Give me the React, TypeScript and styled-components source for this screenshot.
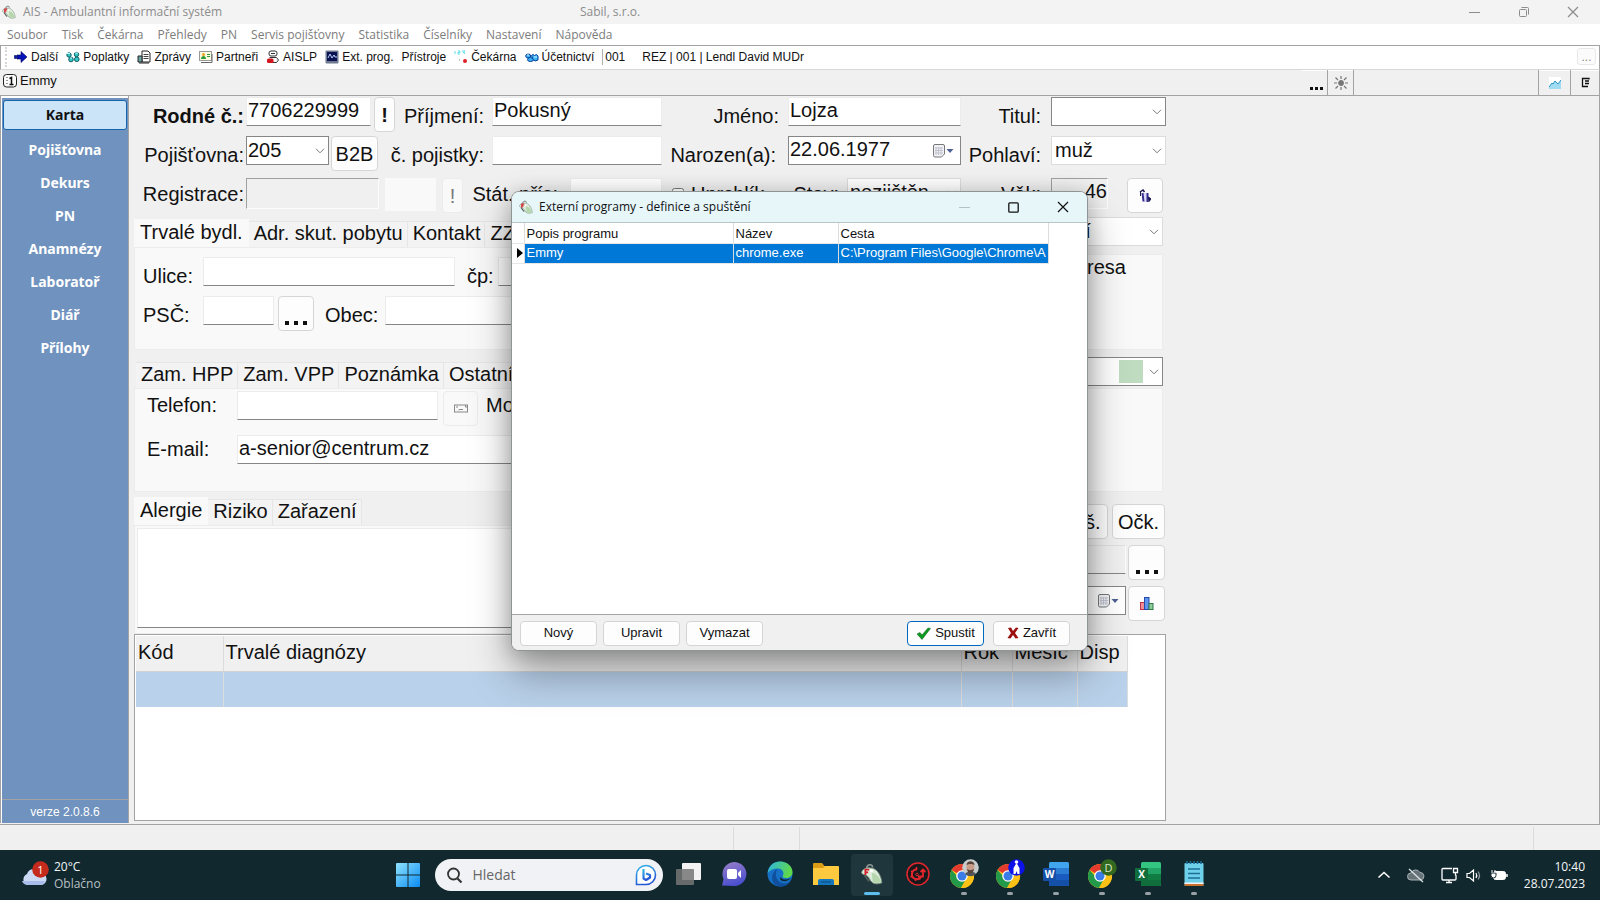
import React from 'react';
import styled, { createGlobalStyle, css } from 'styled-components';

const ARIAL = '"Liberation Sans", Arial, sans-serif';
const UI = '"Open Sans", "Noto Sans", sans-serif';

const GlobalStyle = createGlobalStyle`
  *, *::before, *::after { box-sizing: border-box; }
  body { margin: 0; background: #f0f0f0; color: #111; font: 12px/16px ${ARIAL}; }
  button, input, select, textarea { font: inherit; color: inherit; margin: 0; border-radius: 0; }
  button { padding: 0; border: 0; background: none; white-space: nowrap; }
  svg { display: block; flex: none; }
`;

const Desktop = styled.div`
  position: relative;
  display: flex;
  flex-direction: column;
  min-height: 100vh;
  overflow: hidden;
`;

/* ---------- window chrome ---------- */
const TitleBar = styled.header`
  display: flex;
  align-items: center;
  height: 24px;
  padding: 0 3px 0 2px;
  gap: 7px;
  background: #f3f3f3;
  color: #8c8c8c;
  font-family: ${UI};
`;
const AppTitle = styled.span`flex: 0 1 550px;`;
const WindowButtons = styled.div`
  display: flex;
  margin-left: auto;
`;
const WindowButton = styled.button`
  display: grid;
  place-items: center;
  width: 49px;
  height: 24px;
`;
const MenuBar = styled.nav`
  display: flex;
  align-items: center;
  gap: 14px;
  height: 21px;
  padding: 0 7px;
  background: #fff;
  font-family: ${UI};
`;
const MenuItem = styled.button`color: #7c7c7c;`;
const Toolbar = styled.div`
  display: flex;
  align-items: center;
  gap: 8px;
  height: 25px;
  padding: 0 3px 2px 4px;
  background: #fff;
  border: 1px solid #a3a3a3;
  border-bottom-color: #d8d8d8;
`;
const Grip = styled.span`
  height: 20px;
  border-left: 2px dotted #d6d6d6;
  margin-right: -1px;
`;
const ToolButton = styled.button`
  display: flex;
  align-items: center;
  gap: 3px;
`;
const ToolText = styled.span<{ $rule?: boolean }>`
  margin-right: 9px;
  ${p => p.$rule && css`border-left: 1px solid #b0b0b0; padding-left: 2px;`}
`;
const MoreButton = styled.button`
  width: 19px;
  height: 17px;
  margin-left: auto;
  border: 1px solid #e8e8e8;
  border-radius: 3px;
  background: #fbfbfb;
  color: #8a8a8a;
  line-height: 12px;
`;
const ContextBar = styled.div`
  display: flex;
  height: 26px;
  border-bottom: 1px solid #a3a3a3;
  border-right: 1px solid #a3a3a3;
`;
const ContextTitle = styled.div`
  display: flex;
  align-items: center;
  gap: 3px;
  flex: 1;
  padding: 0 3px 4px;
  font-size: 13px;
`;
const ContextCell = styled.button<{ $w: number }>`
  display: grid;
  place-items: center;
  width: ${p => p.$w}px;
  border-right: 1px solid #a3a3a3;
  box-shadow: inset 0 1px #fff;
  &:last-child { border-right: 0; }
`;
const ContextSpace = styled.div`
  width: 185px;
  border-right: 1px solid #a3a3a3;
`;

/* ---------- work area ---------- */
const WorkArea = styled.main`
  display: flex;
  flex: 1;
  gap: 5px;
  border-right: 1px solid #a3a3a3;
`;
const Sidebar = styled.aside`
  display: flex;
  flex-direction: column;
  width: 129px;
  margin-bottom: 1px;
  border-left: 1px solid #a3a3a3;
  box-shadow: inset 2px 2px #fff;
  border-right: 1px solid #a3a3a3;
`;
const SideNav = styled.nav`
  display: flex;
  flex: 1;
  flex-direction: column;
  margin: 2px 0 0 1px;
  padding: 2px 1px 0;
  background: #7092be;
`;
const SideItem = styled.button<{ $active?: boolean }>`
  height: 33px;
  color: #fff;
  font: bold 14px/20px "Noto Sans", "Open Sans", sans-serif;
  ${p => p.$active && css`
    height: 30px;
    margin-bottom: 3px;
    border: 1px solid #1464ac;
    border-radius: 3px;
    background: #cce4f7;
    color: #111;
  `}
`;
const Version = styled.div`
  height: 24px;
  margin-left: 1px;
  border-top: 1px solid #a3a3a3;
  background: #7092be;
  color: #fff;
  line-height: 25px;
  text-align: center;
`;
const Card = styled.section`
  display: flex;
  flex: 0 1 1032px;
  flex-direction: column;
  padding: 1px 0 3px;
  font-size: 20px;
  line-height: 24px;
`;

const field = css`
  display: block;
  min-width: 0;
  height: 29px;
  padding: 0 1px 2px;
  border: 1px solid #ececec;
  border-bottom-color: #868686;
  background: #fff;
  outline: 0;
`;
const Input = styled.input<{ $w?: number; $flat?: boolean; $muted?: boolean }>`
  ${field}
  width: ${p => (p.$w ? `${p.$w}px` : '100%')};
  ${p => p.$flat && css`
    height: 31px;
    padding-bottom: 4px;
    background: #f0f0f0;
    border-color: #a0a0a0 #fcfcfc #fcfcfc #a0a0a0;
  `}
  ${p => p.$muted && css`background: #f0f0f0; border-color: #e0e0e0 #fcfcfc #868686;`}
  &[data-align='end'] { text-align: right; padding-right: 0; }
`;
const Pale = styled.div`
  width: 51px;
  height: 33px;
  background: #f9f9f9;
`;
const Label = styled.label<{ $bold?: boolean; $gap?: number }>`
  padding-right: ${p => p.$gap ?? 8}px;
  line-height: 38px;
  text-align: right;
  white-space: nowrap;
  font-weight: ${p => (p.$bold ? 'bold' : 'normal')};
`;
const FormRow = styled.div<{ $h: number; $lead?: string }>`
  display: grid;
  grid-template-columns: 112px ${p => p.$lead ?? '136px 110px'} 170px 126px 173px 90px 115px;
  height: ${p => p.$h}px;
`;
const StateRow = styled(FormRow)`
  grid-template-columns: 112px 218px 106px 92px 123px 62px 114px 90px 115px;
  & > :not(label) { margin-top: 2px; }
  & > label { line-height: 36px; }
`;
const Group = styled.div<{ $gap?: number }>`
  display: flex;
  align-items: flex-start;
  gap: ${p => p.$gap ?? 3}px;
  & > * { flex: none; }
`;
const Check = styled.div`
  display: flex;
  align-items: center;
  gap: 7px;
  padding-left: 10px;
  height: 32px;
`;
const CheckBox = styled.input`
  width: 12px;
  height: 12px;
  margin: 0;
`;
const Button = styled.button<{ $w: number; $faint?: boolean; $bold?: boolean }>`
  display: grid;
  flex: none;
  place-items: center;
  width: ${p => p.$w}px;
  height: 35px;
  border: 1px solid ${p => (p.$faint ? '#ececec' : '#d6d6d6')};
  border-radius: 4px;
  background: ${p => (p.$faint ? '#f9f9f9' : '#fdfdfd')};
  color: ${p => (p.$faint ? '#777' : '#111')};
  font-weight: ${p => (p.$bold ? 'bold' : 'normal')};
`;
const SelectBox = styled.div<{ $w?: number; $dark?: boolean }>`
  display: grid;
  align-items: center;
  width: ${p => (p.$w ? `${p.$w}px` : '100%')};
  height: 29px;
  border: 1px solid ${p => (p.$dark ? '#868686' : '#dcdcdc')};
  background: #fff;
  & > * { grid-area: 1 / 1; }
  & > svg { justify-self: end; margin-right: 3px; pointer-events: none; }
`;
const NativeSelect = styled.select<{ $pad?: number }>`
  appearance: none;
  width: 100%;
  height: 27px;
  padding: 0 0 2px ${p => p.$pad ?? 1}px;
  border: 0;
  background: transparent;
  outline: 0;
`;
const DateBox = styled.div`
  display: flex;
  align-items: center;
  height: 29px;
  padding-right: 6px;
  border: 1px solid #868686;
  background: #fff;
`;
const DateInput = styled.input`
  flex: 1;
  min-width: 0;
  height: 27px;
  padding: 0 0 2px 1px;
  border: 0;
  background: transparent;
  outline: 0;
`;

const Split = styled.div<{ $h: number }>`
  display: flex;
  gap: 6px;
  height: ${p => p.$h}px;
  padding-right: 3px;
`;
const TabArea = styled.div<{ $top: number }>`
  display: flex;
  flex: 1;
  flex-direction: column;
  padding-top: ${p => p.$top}px;
`;
const TabStrip = styled.div<{ $inset?: boolean }>`
  display: flex;
  align-items: flex-end;
  padding-left: ${p => (p.$inset ? 2 : 0)}px;
`;
const Tab = styled.button<{ $active?: boolean }>`
  height: 26px;
  padding: 0 5px 2px;
  background: #f3f3f3;
  box-shadow: inset -1px 1px #e6e6e6;
  ${p => p.$active && css`
    height: 28px;
    padding: 0 6px 3px;
    background: #f9f9f9;
    box-shadow: none;
  `}
`;
const TabPanel = styled.div`
  flex: 1;
  border: 1px solid #ececec;
  background: #f9f9f9;
`;
const AddressPanel = styled(TabPanel)`
  display: flex;
  flex-direction: column;
  gap: 3px;
  padding: 9px 0 0 8px;
`;
const AddressRow = styled.div`
  display: flex;
  align-items: flex-start;
  height: 36px;
  overflow: hidden;
  & > label { line-height: 38px; }
`;
const FixedLabel = styled.label<{ $w: number; $lead?: number }>`
  flex: none;
  width: ${p => p.$w}px;
  padding-left: ${p => p.$lead ?? 0}px;
`;
const ContactHead = styled.div`
  display: flex;
  align-items: flex-end;
  justify-content: space-between;
  height: 38px;
  padding-right: 3px;
`;
const ContactSelect = styled.div`padding-bottom: 2px;`;
const Swatch = styled.span`
  justify-self: end;
  width: 24px;
  height: 23px;
  margin-right: 19px;
  background: #bfdcc1;
`;
const ContactPanel = styled.div`
  height: 104px;
  margin-right: 3px;
  padding: 2px 0 0 12px;
  border: 1px solid #ececec;
  background: #f9f9f9;
`;
const ContactRow = styled.div`
  display: flex;
  align-items: flex-start;
  height: 44px;
  & > label { line-height: 28px; }
`;
const Mobile = styled.label`padding: 0 8px;`;
const RightColumn = styled.div`
  display: flex;
  flex-direction: column;
  gap: 8px;
  width: 200px;
`;
const SideCaption = styled(TabPanel)`
  padding: 0 36px 0 0;
  text-align: right;
`;
const Notes = styled.textarea`
  display: block;
  width: 100%;
  height: 100px;
  border: 1px solid #ececec;
  border-bottom-color: #868686;
  background: #fff;
  resize: none;
  outline: 0;
`;
const NotesPanel = styled(TabPanel)`padding: 2px;`;
const Actions = styled.div`
  display: flex;
  flex-direction: column;
  gap: 6px;
  width: 250px;
  margin-right: -2px;
  padding-top: 12px;
`;
const ActionRow = styled.div`
  display: flex;
  justify-content: flex-end;
  align-items: flex-start;
  gap: 2px;
  height: 35px;
  & > button + button { margin-left: 2px; }
  & > div, & > input { flex: 1; }
`;

const DiagnosisFrame = styled.div`
  flex: 1;
  border: 1px solid #a3a3a3;
  padding: 1px;
  background: #fff;
`;
const DiagnosisTable = styled.table`
  width: 991px;
  table-layout: fixed;
  border-collapse: collapse;
  th, td { height: 36px; padding: 0 2px 4px; text-align: left; font-weight: normal; border-right: 1px solid #dcdcdc; }
  th { height: 35px; padding-bottom: 3px; background: #f0f0f0; border-bottom: 1px solid #d2d2d2; }
  td { background: #b9d1ea; }
`;
const StatusBar = styled.footer`
  display: flex;
  height: 26px;
  border-top: 1px solid #a3a3a3;
`;
const StatusCell = styled.div<{ $w?: number }>`
  flex: ${p => (p.$w ? `0 0 ${p.$w}px` : 1)};
  margin-top: 2px;
  border-right: 1px solid #dcdcdc;
  &:last-child { border-right: 0; }
`;

/* ---------- dialog ---------- */
const Dialog = styled.div`
  position: absolute;
  left: 511px;
  top: 191px;
  display: flex;
  flex-direction: column;
  width: 577px;
  height: 460px;
  overflow: hidden;
  border: 1px solid #8f9496;
  border-radius: 8px;
  background: #fff;
  font-size: 13px;
  box-shadow: 0 22px 40px rgba(0, 0, 0, 0.34), 0 2px 20px rgba(0, 0, 0, 0.2);
`;
const DialogTitle = styled.div`
  display: flex;
  align-items: center;
  gap: 6px;
  height: 31px;
  padding-left: 7px;
  border-bottom: 1px solid #b9c4c6;
  background: #e6f6f9;
  font: 12px/16px ${UI};
`;
const DialogBody = styled.div`flex: 1;`;
const ProgramTable = styled.table`
  width: 536px;
  table-layout: fixed;
  border-collapse: collapse;
  th, td {
    height: 20px;
    padding: 0 2px;
    overflow: hidden;
    border-right: 1px solid #dcdcdc;
    border-bottom: 1px solid #e6e6e6;
    text-align: left;
    font-weight: normal;
    white-space: nowrap;
  }
  th { padding-top: 2px; }
  td { background: #0078d7; color: #fff; }
  td:first-child { background: #fff; padding: 0 0 0 5px; }
`;
const DialogFooter = styled.div`
  display: flex;
  align-items: center;
  gap: 6px;
  height: 36px;
  padding: 1px 17px 0 8px;
  border-top: 1px solid #a3a3a3;
  background: #f0f0f0;
`;
const DialogButton = styled.button<{ $primary?: boolean }>`
  display: flex;
  align-items: center;
  justify-content: center;
  gap: 4px;
  width: 77px;
  height: 25px;
  border: 1px solid ${p => (p.$primary ? '#0067c0' : '#d4d4d4')};
  border-radius: 4px;
  background: #fdfdfd;
`;
const FooterEnd = styled.div`
  display: flex;
  gap: 9px;
  margin-left: auto;
`;

/* ---------- taskbar ---------- */
const Taskbar = styled.footer`
  display: grid;
  grid-template-columns: 1fr auto 1fr;
  align-items: center;
  height: 50px;
  background: #11282f;
  color: #f4f6f7;
  font-family: ${UI};
`;
const Weather = styled.button`
  display: flex;
  align-items: center;
  gap: 5px;
  padding-left: 20px;
  text-align: left;
  line-height: 17px;
`;
const Muted = styled.div`color: #b9c0c3;`;
const TaskIcons = styled.div`
  display: flex;
  align-items: center;
`;
const StartButton = styled.button`
  padding: 0 15px 0 12px;
`;
const SearchBox = styled.label`
  display: flex;
  align-items: center;
  gap: 10px;
  width: 228px;
  height: 32px;
  padding: 0 6px 0 11px;
  border-radius: 16px;
  background: #f1f2f5;
  margin-right: 2px;
`;
const SearchInput = styled.input`
  flex: 1;
  min-width: 0;
  padding: 0;
  border: 0;
  background: transparent;
  outline: 0;
  color: #555;
  font-size: 14px;
  &::placeholder { color: #666; opacity: 1; }
`;
const TaskButton = styled.button<{ $state?: 'active' | 'open' }>`
  display: grid;
  grid-template-rows: 1fr 3px;
  justify-items: center;
  align-items: center;
  width: 42px;
  height: 42px;
  margin: 0 2px;
  padding: 2px 0 1px;
  border-radius: 4px;
  background: ${p => (p.$state === 'active' ? '#20363d' : 'transparent')};
  &::after {
    content: '';
    width: ${p => (p.$state === 'active' ? 16 : 6)}px;
    height: 3px;
    border-radius: 2px;
    background: ${p => (p.$state === 'active' ? '#5cbdf0' : p.$state ? '#98a1a5' : 'transparent')};
  }
`;
const Tray = styled.div`
  display: flex;
  align-items: center;
  justify-content: flex-end;
  gap: 7px;
  padding-right: 15px;
`;
const TrayButton = styled.button<{ $wide?: boolean }>`padding-right: ${p => (p.$wide ? 9 : 0)}px;`;
const Clock = styled.button`
  text-align: right;
  line-height: 17px;
`;

/* ---------- icons ---------- */
const Chevron = () => (
  <svg width="10" height="6" viewBox="0 0 10 6" fill="none" stroke="#777"><path d="M1 .8 5 4.8 9 .8" /></svg>
);
const Logo = ({ size = 14 }: { size?: number }) => (
  <svg width={size} height={size} viewBox="0 0 20 20">
    <path d="M5 5.500C5 1 10.500.2 10.500 4" fill="none" stroke="#8b9690" strokeWidth="1.500" />
    <path d="M.5 9C1 5.500 5 4 8.500 4.500c5 0 9.500 5 10.500 13.500-4 1.500-7 1.200-9-.5-2-1.800-2.500-4.500-4.500-6C4 10.500 2 11 .5 9z" fill="#dcecd9" stroke="#7b8f82" strokeWidth=".8" />
    <path d="M10 9c3 0 6.500 3 8.500 8.500-3.500 1.200-6.500.8-8-.5z" fill="#b5d6ad" />
    <path d="M3 11c1.500 1 2 4 4.500 5.500" fill="none" stroke="#526058" strokeWidth="1.600" />
    <path d="M4 11V6h3.500M4 8.500h2.500" fill="none" stroke="#d6202e" strokeWidth="1.700" />
    <circle cx="9.500" cy="7" r="1.400" fill="#fff" />
  </svg>
);
const MinimizeIcon = ({ c }: { c: string }) => <svg width="11" height="11" stroke={c}><path d="M0 5.500h11" /></svg>;
const RestoreIcon = () => (
  <svg width="12" height="12" fill="none" stroke="#8c8c8c"><rect x="1.500" y="3.500" width="7" height="7" rx="1" /><path d="M3.500 1.500h6a1 1 0 0 1 1 1v6" /></svg>
);
const MaximizeIcon = () => <svg width="11" height="11" fill="none" stroke="#111" strokeWidth="1.300"><rect x=".8" y=".8" width="9.400" height="9.400" rx="1" /></svg>;
const CloseIcon = ({ c }: { c: string }) => <svg width="12" height="12" stroke={c} strokeWidth="1.200"><path d="m1 1 10 10M11 1 1 11" /></svg>;
const NextIcon = () => <svg width="14" height="14" viewBox="0 0 14 14"><path d="M.5 5.500h2v3h-2zM3 5h4V1.500L13 7l-6 5.500V9H3z" fill="#0512b8" stroke="#000a50" strokeWidth=".6" /></svg>;
const FeesIcon = () => (
  <svg width="14" height="14" viewBox="0 0 14 14"><g fill="#35c6c6" stroke="#0c5e62"><circle cx="3" cy="5" r="2.200" /><circle cx="5" cy="9.500" r="2.300" /><circle cx="10.500" cy="4.500" r="2.200" /><circle cx="10.800" cy="9.300" r="2.300" /></g><path d="M1 3.500h3M9 3h3M4 8h2" stroke="#c6ffff" /></svg>
);
const ReportsIcon = () => (
  <svg width="14" height="14" viewBox="0 0 14 14"><path d="M5 1h6l2 2v9H5z" fill="#fff" stroke="#222" /><path d="M6.500 4.500h5M6.500 6.500h5M6.500 8.500h5" stroke="#444" /><path d="M1 6h4v6H1z" fill="#6aa5a6" stroke="#222" /><path d="M2 13h10" stroke="#222" /></svg>
);
const PartnersIcon = () => (
  <svg width="14" height="14" viewBox="0 0 14 14"><rect x=".5" y="1.500" width="12" height="9" fill="#fffce0" stroke="#999" /><path d="M2 12.500h11V4" fill="none" stroke="#666" /><path d="M2 9c0-4 5-4 5 0z" fill="#2f9c35" /><circle cx="4.500" cy="4.500" r="1.500" fill="#f0a020" /><path d="M8 4.500h3M8 6.500h3" stroke="#2f9c35" /></svg>
);
const AislpIcon = () => (
  <svg width="14" height="14" viewBox="0 0 14 14"><rect x="3" y="1" width="8" height="5" rx="2" fill="#fff" stroke="#333" /><path d="M5 3.500h4" stroke="#333" /><path d="M3.500 7.500h7l2 2.500-2 2.500H6" fill="#f6f6f6" stroke="#333" /><rect x="1" y="8.500" width="6.500" height="4.500" rx="1.500" fill="#d1161c" /></svg>
);
const ExtIcon = () => (
  <svg width="14" height="14" viewBox="0 0 14 14"><rect x=".5" y=".5" width="13" height="13" rx="1" fill="#6f7a90" /><rect x="2" y="2" width="10" height="9" fill="#0a1250" /><path d="M3 8 5 4l2 4 2-3 1 2h2" fill="none" stroke="#b7d2ff" /></svg>
);
const WaitingIcon = () => (
  <svg width="14" height="14" viewBox="0 0 14 14"><path d="M1 1v3M4 1h2v1.500H4V4h2M8 1h3l-2 1.500 2 .5-1 1" fill="none" stroke="#54dbe4" strokeWidth=".9" /><circle cx="11" cy="11" r="2" fill="#dd1f26" /><path d="M5 10h1" stroke="#888" /></svg>
);
const AccountIcon = () => (
  <svg width="14" height="14" viewBox="0 0 14 14"><g fill="#37b4f4" stroke="#0b3c9c"><ellipse cx="3.200" cy="6" rx="2.500" ry="2" /><ellipse cx="5.500" cy="9.500" rx="3" ry="2" /><path d="M6.500 5.500 8 4.500l1.500 1 2-1 1.500 1.500v4l-3 1-2-1.500z" /></g><path d="M2 5h2M9 7h3" stroke="#d9f6ff" /></svg>
);
const PageIcon = () => (
  <svg width="14" height="14" viewBox="0 0 14 14"><rect x=".5" y=".5" width="13" height="12.500" rx="3" fill="#fafafa" stroke="#222" /><path d="M3 3.500h2M3 6.500h2M3 9.500h2" stroke="#999" /><path d="m6.500 4.500 2-1v7M6.500 10.500h4" fill="none" stroke="#111" strokeWidth="1.500" /></svg>
);
const SunIcon = () => (
  <svg width="14" height="14" viewBox="0 0 14 14" stroke="#777" strokeWidth="1.200"><circle cx="7" cy="7" r="2.300" fill="#777" /><path d="M7 0v3M7 11v3M0 7h3M11 7h3M1.500 1.500l2.500 2.500M10 10l2.500 2.500M12.500 1.500 10 4M4 10l-2.500 2.500" /></svg>
);
const TrendIcon = () => (
  <svg width="12" height="12" viewBox="0 0 12 12"><rect width="12" height="12" fill="#fff" /><path d="m0 10 3-4 1 1 2-3 3 3 3-4v9H0z" fill="#9fdcf2" /><path d="m0 10 3-4 1 1 2-3 3 3 3-4" fill="none" stroke="#2a94c9" /></svg>
);
const ServerIcon = () => <svg width="9" height="12" viewBox="0 0 9 12"><path d="M7 1.500H1.500v8H7M4 4h4M4 6.500h4M4 1.500h4v1" fill="none" stroke="#111" strokeWidth="1.300" /></svg>;
const DotsIcon = () => (
  <svg width="24" height="18" viewBox="0 0 24 18" fill="#111"><path d="M7 13h3v3H7zM12 13h3v3h-3zM17 13h3v3h-3z" /></svg>
);
const WideDotsIcon = () => <svg width="24" height="28" fill="#111"><path d="M1 21h4v4H1zM10 21h4v4h-4zM19 21h4v4h-4z" /></svg>;
const CalendarIcon = () => (
  <svg width="21" height="14" viewBox="0 0 21 14"><path d="M.5 2a1.500 1.500 0 0 1 1.500-1.500h8A1.500 1.500 0 0 1 11.500 2v8l-3 3H2A1.500 1.500 0 0 1 .5 11.500z" fill="#f2f3f7" stroke="#777" /><path d="M3 3v8M5.500 3v8M8 3v8M2 4h8M2 6.500h8M2 9h8" stroke="#c0c2ce" /><path d="M13.500 5h7l-3.500 4z" fill="#4c5f92" /></svg>
);
const TrashIcon = () => (
  <svg width="12" height="14" viewBox="0 0 12 14"><path d="M1 3 4 1l1.500 2" fill="none" stroke="#191650" strokeWidth="1.500" /><path d="M3.500 4h6v9h-5z" fill="#dcdaf8" /><path d="M3.500 4 4.500 12.500M8.500 4v9" stroke="#37308f" strokeWidth="2" /><path d="M1.500 3v4M9.500 8l2.500 2-2 2.500z" stroke="#191650" fill="#191650" /></svg>
);
const EnvelopeIcon = () => <svg width="14" height="9" viewBox="0 0 14 9" fill="none" stroke="#888"><rect x=".5" y="1" width="13" height="7" /><path d="M2 3h2M4.500 6l1.500-.5h3M11.500 1v2h2" /></svg>;
const ChartIcon = () => (
  <svg width="14" height="13" viewBox="0 0 14 13"><rect x=".5" y="5.500" width="4" height="7" fill="#ef8e96" stroke="#bf3644" /><rect x="4.500" y=".5" width="4.500" height="12" fill="#5d95ee" stroke="#264aa8" /><rect x="9" y="6.500" width="4" height="6" fill="#8fcd9b" stroke="#31794b" /></svg>
);
const TickIcon = () => <svg width="15" height="13" viewBox="0 0 15 13"><path d="m1 7 3-1.500L6 8l6-7 2.500.5L6 12.500z" fill="#0c9a20" stroke="#045a10" strokeWidth=".5" /></svg>;
const CrossIcon = () => <svg width="12" height="12" viewBox="0 0 12 12"><path d="m1 1 3-.5 2 3.500 3-3.500L11.500 1 8 6l3.500 5-3 .5L6 8l-2.500 3.500L.5 11 4 6z" fill="#9c1010" /></svg>;
const MarkerIcon = () => <svg width="6" height="10"><path d="M0 0 6 5 0 10z" fill="#000" /></svg>;

const WeatherIcon = () => (
  <svg width="29" height="28" viewBox="0 0 29 28">
    <path d="M7 24a6 6 0 0 1 0-11 7 7 0 0 1 13-1 6 6 0 0 1 1 12z" fill="#ccdaf6" /><path d="M2 20h23a5 5 0 0 1-4 4H7a6 6 0 0 1-5-4z" fill="#a9bdea" />
    <circle cx="20.500" cy="8.500" r="8.300" fill="#c42b1c" /><text x="20.500" y="12.500" fontSize="11" textAnchor="middle" fill="#fff">1</text>
  </svg>
);
const StartIcon = () => (
  <svg width="24" height="24" viewBox="0 0 24 24"><defs><linearGradient id="st" x2="1" y2="1"><stop stopColor="#8fe3ff" /><stop offset="1" stopColor="#0a8bf2" /></linearGradient></defs><path d="M0 1a1 1 0 0 1 1-1h10.500v11.500H0zM12.500 0H23a1 1 0 0 1 1 1v10.500H12.500zM0 12.500h11.500V24H1a1 1 0 0 1-1-1zM12.500 12.500H24V23a1 1 0 0 1-1 1H12.500z" fill="url(#st)" /></svg>
);
const SearchIcon = () => <svg width="17" height="17" fill="none" stroke="#333" strokeWidth="1.800"><circle cx="7.500" cy="7" r="5.500" /><path d="m11.500 11.500 4 4" strokeWidth="2.200" /></svg>;
const BingIcon = () => (
  <svg width="22" height="22" viewBox="0 0 22 22"><defs><linearGradient id="bg" x2=".4" y2="1"><stop stopColor="#35b8e8" /><stop offset="1" stopColor="#2455d4" /></linearGradient></defs><path d="M1.500 20.500V11a9.500 9.500 0 1 1 9.500 9.500z" fill="#fff" stroke="url(#bg)" strokeWidth="1.600" /><path d="M8.500 5v9.500l2.500 1.500 4-2.500v-2.500l-4-1.500" fill="none" stroke="url(#bg)" strokeWidth="2.200" strokeLinejoin="round" /></svg>
);
const TaskViewIcon = () => <svg width="26" height="24"><rect x="7" y="1" width="19" height="17" rx="1" fill="#f2f2f2" /><rect x="1" y="7" width="18" height="16" rx="1" fill="#767676" opacity=".85" /></svg>;
const TeamsIcon = () => (
  <svg width="26" height="26" viewBox="0 0 26 26"><defs><linearGradient id="tm" x2=".3" y2="1"><stop stopColor="#9a7fc8" /><stop offset="1" stopColor="#4c50cf" /></linearGradient></defs><path d="M1 24.500 2.500 18A12 12 0 1 1 13 25z" fill="url(#tm)" /><rect x="6" y="8" width="10" height="10" rx="2" fill="#fff" /><path d="m17 12 3-3v8l-3-3z" fill="#fff" /></svg>
);
const EdgeIcon = () => (
  <svg width="26" height="26" viewBox="0 0 26 26"><defs><linearGradient id="eg" x2="1" y2=".3"><stop stopColor="#2bb5e8" /><stop offset="1" stopColor="#5fd84a" /></linearGradient></defs><circle cx="13" cy="13" r="12.500" fill="#1670c5" /><path d="M.6 12C2 4 7 .5 13 .5 21 .5 25.500 6 25.500 11c0 4-3 6-6.500 6-3 0-4-1-3-2.500 1.500-3-.5-7-5-7-5 0-8.500 2-10.400 4.500z" fill="url(#eg)" /><path d="M11 8c-4 3-3 13 6 14.500 2 .3 5-1 6-2-3 6-12 6.500-16 2S6 9 11 8z" fill="#0f4f9e" /><path d="M14 15c-1 3 4 5 10 2-2 3-9 5-11 1z" fill="#11282f" /></svg>
);
const FolderIcon = () => (
  <svg width="26" height="24" viewBox="0 0 26 24"><path d="M0 2a1 1 0 0 1 1-1h8l2.500 3H25v5H0z" fill="#dc9c15" /><path d="M0 6h10l2-2h13a1 1 0 0 1 1 1v18H0z" fill="#fdc93e" /><path d="M5 23v-4a2 2 0 0 1 2-2h12a2 2 0 0 1 2 2v4z" fill="#1477bd" /><path d="M8 20h10" stroke="#0c5791" strokeWidth="1.500" /></svg>
);
const GearIcon = () => (
  <svg width="24" height="24" viewBox="0 0 24 24" fill="none" stroke="#e2262c"><circle cx="12" cy="12" r="11" fill="#17191d" strokeWidth="1.500" /><path d="M11 7.500a4.800 4.800 0 1 0 4 7" strokeWidth="2" /><path d="M10.500 5v3M5 9l2 1.500M4.500 15l2.500-1M9.500 19v-3M14 17.500l-1-2" strokeWidth="1.600" /><circle cx="11" cy="12.500" r="1.300" /><path d="M12 14.500h5V8M14.500 10 17 7.500l2.500 2.500" strokeWidth="1.800" /></svg>
);
const ChromeIcon = ({ badge }: { badge: 'photo' | 'figure' | 'letter' }) => (
  <svg width="30" height="30" viewBox="0 0 30 30">
    <circle cx="13" cy="17" r="12" fill="#fbc116" />
    <path d="M13 17 2.600 11A12 12 0 0 1 23.400 11z" fill="#e33b2e" />
    <path d="M2.600 11A12 12 0 0 0 12 29l5-8.500L8 17z" fill="#229a49" />
    <path d="M23.400 11H13v3l4 6-5 9a12 12 0 0 0 11.400-18z" fill="#fbc116" />
    <circle cx="13" cy="17" r="5.800" fill="#fff" /><circle cx="13" cy="17" r="4.500" fill="#3b7de8" />
    {badge === 'photo' && <g><circle cx="21.500" cy="8.500" r="8.300" fill="#c9cccd" /><path d="M16 15c1-3 10-3 11 0a8 8 0 0 1-11 0z" fill="#50565b" /><ellipse cx="21.500" cy="8.500" rx="4" ry="5" fill="#c89d89" /><path d="M17.500 6c0-5 8-5 8 0-2-1.500-6-1.500-8 0M18 10c1 6 6 6 7 0-2 1.500-5 1.500-7 0" fill="#59443c" /></g>}
    {badge === 'figure' && <g><circle cx="21.500" cy="8.500" r="8.300" fill="#0d12e8" /><circle cx="21.500" cy="3" r="1.800" fill="#fff" /><path d="m21.500 4 3 5v6h-2l-1-3-1 3h-2V9z" fill="#fff" /></g>}
    {badge === 'letter' && <g><circle cx="21.500" cy="8.500" r="8.300" fill="#33691e" /><text x="21.500" y="12.500" fontSize="11" textAnchor="middle" fill="#d5e8cc">D</text></g>}
  </svg>
);
const OfficeIcon = ({ letter, tones }: { letter: string; tones: string[] }) => (
  <svg width="26" height="24" viewBox="0 0 26 24">
    <rect x="6" width="20" height="24" rx="1.500" fill={tones[0]} /><path d="M6 6h20v6H6z" fill={tones[1]} /><path d="M6 12h20v6H6z" fill={tones[2]} /><path d="M6 18h20v4.500a1.500 1.500 0 0 1-1.500 1.500h-17A1.500 1.500 0 0 1 6 22.500z" fill={tones[3]} />
    <rect x="0" y="6" width="13" height="13" rx="1" fill={tones[3]} /><text x="6.500" y="16" fontSize="10" fontWeight="700" textAnchor="middle" fill="#fff">{letter}</text>
  </svg>
);
const NotepadIcon = () => (
  <svg width="20" height="26" viewBox="0 0 20 26"><rect x=".5" y="2" width="19" height="23" rx="1" fill="#6fd0ea" /><path d="M.5 22.500h19V24a1 1 0 0 1-1 1h-17a1 1 0 0 1-1-1z" fill="#c9712f" /><path d="M.500 21.500h19v1.500H.5z" fill="#eef4f6" /><path d="M3 0v3M6.500 0v3M10 0v3M13.500 0v3M17 0v3" stroke="#1b6b94" strokeWidth="1.600" /><path d="M4 8h12M4 12.500h12M4 17h12" stroke="#1e6f96" strokeWidth="1.600" /></svg>
);

const menu = ['Soubor', 'Tisk', 'Čekárna', 'Přehledy', 'PN', 'Servis pojišťovny', 'Statistika', 'Číselníky', 'Nastavení', 'Nápověda'];
const tools: [string, React.FC | null][] = [
  ['Další', NextIcon], ['Poplatky', FeesIcon], ['Zprávy', ReportsIcon], ['Partneři', PartnersIcon], ['AISLP', AislpIcon],
  ['Ext. prog.', ExtIcon], ['Přístroje', null], ['Čekárna', WaitingIcon], ['Účetnictví', AccountIcon],
];
const sections = ['Karta', 'Pojišťovna', 'Dekurs', 'PN', 'Anamnézy', 'Laboratoř', 'Diář', 'Přílohy'];

type PickerProps = { id?: string; name?: string; value: string; width?: number; dark?: boolean; pad?: number; swatch?: boolean };
const Picker = ({ id, name, value, width, dark, pad, swatch }: PickerProps) => (
  <SelectBox $w={width} $dark={dark}>
    <NativeSelect id={id} aria-label={name} $pad={pad} defaultValue={value}><option value={value}>{value}</option></NativeSelect>
    {swatch && <Swatch />}
    <Chevron />
  </SelectBox>
);

const Tabs = ({ names, active, inset }: { names: string[]; active?: number; inset?: boolean }) => (
  <TabStrip role="tablist" $inset={inset}>
    {names.map((n, i) => <Tab key={n} role="tab" aria-selected={i === active} $active={i === active}>{n}</Tab>)}
  </TabStrip>
);

const PatientCard = () => (
  <Card>
    <FormRow $h={39} $lead="150px 96px">
      <Label htmlFor="rc" $bold $gap={2}>Rodné č.:</Label>
      <Group><Input id="rc" $w={125} defaultValue="7706229999" /><Button $w={21} $bold>!</Button></Group>
      <Label htmlFor="surname">Příjmení:</Label>
      <Input id="surname" defaultValue="Pokusný" />
      <Label htmlFor="name" $gap={9}>Jméno:</Label>
      <Input id="name" defaultValue="Lojza" />
      <Label htmlFor="title" $gap={10}>Titul:</Label>
      <Picker id="title" value="" dark />
    </FormRow>
    <FormRow $h={40}>
      <Label htmlFor="insurer" $gap={2}>Pojišťovna:</Label>
      <Group $gap={2}><Picker id="insurer" value="205" width={83} dark /><Button $w={47}>B2B</Button></Group>
      <Label htmlFor="policy">č. pojistky:</Label>
      <Input id="policy" />
      <Label htmlFor="born" $gap={12}>Narozen(a):</Label>
      <DateBox><DateInput id="born" defaultValue="22.06.1977" /><button aria-label="Kalendář"><CalendarIcon /></button></DateBox>
      <Label htmlFor="sex" $gap={10}>Pohlaví:</Label>
      <Picker id="sex" value="muž" pad={3} />
    </FormRow>
    <StateRow $h={41}>
      <Label htmlFor="reg" $gap={2}>Registrace:</Label>
      <Group $gap={6}><Input id="reg" $w={133} $flat readOnly /><Pale /><Button $w={21} $faint>!</Button></Group>
      <Label htmlFor="state" $gap={12}>Stát. přís:</Label>
      <Input id="state" />
      <Check><CheckBox id="refugee" type="checkbox" /><label htmlFor="refugee">Uprchlík</label></Check>
      <Label htmlFor="marital">Stav:</Label>
      <Picker id="marital" value="nezjištěn" pad={2} />
      <Label htmlFor="age" $gap={10}>Věk:</Label>
      <Group $gap={19}><Input id="age" $w={57} $flat readOnly data-align="end" defaultValue="46" /><Button $w={36} aria-label="Smazat"><TrashIcon /></Button></Group>
    </StateRow>

    <Split $h={133}>
      <TabArea $top={2}>
        <Tabs names={['Trvalé bydl.', 'Adr. skut. pobytu', 'Kontakt', 'ZZ']} active={0} />
        <AddressPanel>
          <AddressRow>
            <FixedLabel htmlFor="street" $w={60}>Ulice:</FixedLabel>
            <Input id="street" $w={252} />
            <FixedLabel htmlFor="house" $w={43} $lead={12}>čp:</FixedLabel>
            <Input id="house" $w={90} />
          </AddressRow>
          <AddressRow>
            <FixedLabel htmlFor="zip" $w={60}>PSČ:</FixedLabel>
            <Group $gap={4}><Input id="zip" $w={71} /><Button $w={36} aria-label="Vybrat PSČ"><WideDotsIcon /></Button></Group>
            <FixedLabel htmlFor="city" $w={71} $lead={11}>Obec:</FixedLabel>
            <Input id="city" $w={320} />
          </AddressRow>
        </AddressPanel>
      </TabArea>
      <RightColumn>
        <Picker name="Typ" value="Základní" pad={50} />
        <SideCaption>Adresa</SideCaption>
      </RightColumn>
    </Split>

    <ContactHead>
      <Tabs names={['Zam. HPP', 'Zam. VPP', 'Poznámka', 'Ostatní']} inset />
      <ContactSelect><Picker name="Barva" value="" width={200} dark swatch /></ContactSelect>
    </ContactHead>
    <ContactPanel>
      <ContactRow>
        <FixedLabel htmlFor="phone" $w={90}>Telefon:</FixedLabel>
        <Group $gap={5}><Input id="phone" $w={201} /><Button $w={35} $faint aria-label="SMS"><EnvelopeIcon /></Button></Group>
        <Mobile htmlFor="mobile">Mobil:</Mobile>
        <Input id="mobile" $w={300} />
      </ContactRow>
      <ContactRow>
        <FixedLabel htmlFor="mail" $w={90}>E-mail:</FixedLabel>
        <Input id="mail" $w={600} defaultValue="a-senior@centrum.cz" />
      </ContactRow>
    </ContactPanel>

    <Split $h={142}>
      <TabArea $top={5}>
        <Tabs names={['Alergie', 'Riziko', 'Zařazení']} active={0} />
        <NotesPanel><Notes aria-label="Alergie" /></NotesPanel>
      </TabArea>
      <Actions>
        <ActionRow><Button $w={53}>Vyš.</Button><Button $w={53}>Očk.</Button></ActionRow>
        <ActionRow><Input aria-label="Očkování" readOnly $muted /><Button $w={37} aria-label="Další údaje"><WideDotsIcon /></Button></ActionRow>
        <ActionRow><DateBox><DateInput aria-label="Datum" /><button aria-label="Kalendář"><CalendarIcon /></button></DateBox><Button $w={37} aria-label="Graf"><ChartIcon /></Button></ActionRow>
      </Actions>
    </Split>

    <DiagnosisFrame>
      <DiagnosisTable>
        <colgroup><col width="87" /><col width="738" /><col width="51" /><col width="65" /><col width="50" /></colgroup>
        <thead><tr><th>Kód</th><th>Trvalé diagnózy</th><th>Rok</th><th>Měsíc</th><th>Disp</th></tr></thead>
        <tbody><tr><td /><td /><td /><td /><td /></tr></tbody>
      </DiagnosisTable>
    </DiagnosisFrame>
  </Card>
);

const ProgramsDialog = () => (
  <Dialog role="dialog" aria-labelledby="dlg">
    <DialogTitle>
      <Logo />
      <span id="dlg">Externí programy - definice a spuštění</span>
      <WindowButtons>
        <WindowButton aria-label="Minimalizovat"><MinimizeIcon c="#b4c2c5" /></WindowButton>
        <WindowButton aria-label="Maximalizovat"><MaximizeIcon /></WindowButton>
        <WindowButton aria-label="Zavřít okno"><CloseIcon c="#111" /></WindowButton>
      </WindowButtons>
    </DialogTitle>
    <DialogBody>
      <ProgramTable>
        <colgroup><col width="12" /><col width="209" /><col width="105" /><col width="210" /></colgroup>
        <thead><tr><th /><th>Popis programu</th><th>Název</th><th>Cesta</th></tr></thead>
        <tbody><tr><td><MarkerIcon /></td><td>Emmy</td><td>chrome.exe</td><td>C:\Program Files\Google\Chrome\A</td></tr></tbody>
      </ProgramTable>
    </DialogBody>
    <DialogFooter>
      <DialogButton>Nový</DialogButton>
      <DialogButton>Upravit</DialogButton>
      <DialogButton>Vymazat</DialogButton>
      <FooterEnd>
        <DialogButton $primary><TickIcon />Spustit</DialogButton>
        <DialogButton><CrossIcon />Zavřít</DialogButton>
      </FooterEnd>
    </DialogFooter>
  </Dialog>
);

const WORD = ['#41a5ee', '#2b7cd3', '#185abd', '#1450a8'];
const EXCEL = ['#33c481', '#21a366', '#107c41', '#0f6e3b'];

const SystemTaskbar = () => (
  <Taskbar>
    <Weather><WeatherIcon /><div><div>20°C</div><Muted>Oblačno</Muted></div></Weather>
    <TaskIcons>
      <StartButton aria-label="Start"><StartIcon /></StartButton>
      <SearchBox><SearchIcon /><SearchInput placeholder="Hledat" aria-label="Hledat" /><BingIcon /></SearchBox>
      <TaskButton aria-label="Zobrazení úkolů"><TaskViewIcon /></TaskButton>
      <TaskButton aria-label="Chat"><TeamsIcon /></TaskButton>
      <TaskButton aria-label="Edge"><EdgeIcon /></TaskButton>
      <TaskButton aria-label="Průzkumník"><FolderIcon /></TaskButton>
      <TaskButton aria-label="AIS" $state="active"><Logo size={22} /></TaskButton>
      <TaskButton aria-label="Nástroj"><GearIcon /></TaskButton>
      <TaskButton aria-label="Chrome 1" $state="open"><ChromeIcon badge="photo" /></TaskButton>
      <TaskButton aria-label="Chrome 2" $state="open"><ChromeIcon badge="figure" /></TaskButton>
      <TaskButton aria-label="Word" $state="open"><OfficeIcon letter="W" tones={WORD} /></TaskButton>
      <TaskButton aria-label="Chrome 3" $state="open"><ChromeIcon badge="letter" /></TaskButton>
      <TaskButton aria-label="Excel" $state="open"><OfficeIcon letter="X" tones={EXCEL} /></TaskButton>
      <TaskButton aria-label="Poznámkový blok" $state="open"><NotepadIcon /></TaskButton>
    </TaskIcons>
    <Tray>
      <TrayButton $wide aria-label="Skryté ikony"><svg width="14" height="8" fill="none" stroke="#fff" strokeWidth="1.600"><path d="m1.500 6.500 5.500-5 5.500 5" /></svg></TrayButton>
      <TrayButton $wide aria-label="OneDrive"><svg width="18" height="16" viewBox="0 0 18 16"><path d="M4 13a3.500 3.500 0 0 1 0-7 5 5 0 0 1 9-.5 3.800 3.800 0 0 1 1 7.500z" fill="#66747a" stroke="#aab3b6" /><path d="m2 2 14 13" stroke="#dfe4e6" strokeWidth="1.300" /></svg></TrayButton>
      <TrayButton aria-label="Síť"><svg width="18" height="17" viewBox="0 0 18 17" fill="none" stroke="#fff" strokeWidth="1.300"><path d="M11 1.500H2a1 1 0 0 0-1 1V12a1 1 0 0 0 1 1h12a1 1 0 0 0 1-1V8M5 15.500h6M8 13v2.500M12.500 1.500h4v4h-4zM14.500 5.500v3" /></svg></TrayButton>
      <TrayButton aria-label="Hlasitost"><svg width="17" height="15" viewBox="0 0 17 15" fill="none" stroke="#fff" strokeWidth="1.200"><path d="M1 5.500h2.500L7.500 2v11l-4-3.500H1zM10 5q1.500 2.500 0 5" /><path d="M12 3.500q3 4 0 8" stroke="#93a0a5" /></svg></TrayButton>
      <TrayButton $wide aria-label="Baterie"><svg width="18" height="14" viewBox="0 0 18 14"><rect x="3.500" y="3.500" width="12" height="8" rx="2" fill="#fff" stroke="#fff" /><path d="M17 6v3" stroke="#fff" strokeWidth="1.500" /><path d="M1 5h5v2.500a2.500 2.500 0 0 1-5 0z" fill="#fff" stroke="#11282f" /><path d="M2 2v3M5 2v3" stroke="#fff" /></svg></TrayButton>
      <Clock><div>10:40</div><div>28.07.2023</div></Clock>
    </Tray>
  </Taskbar>
);

export default function App() {
  return (
    <Desktop>
      <GlobalStyle />
      <TitleBar>
        <Logo />
        <AppTitle>AIS - Ambulantní informační systém</AppTitle>
        <span>Sabil, s.r.o.</span>
        <WindowButtons>
          <WindowButton aria-label="Minimalizovat"><MinimizeIcon c="#8c8c8c" /></WindowButton>
          <WindowButton aria-label="Obnovit"><RestoreIcon /></WindowButton>
          <WindowButton aria-label="Zavřít"><CloseIcon c="#8c8c8c" /></WindowButton>
        </WindowButtons>
      </TitleBar>
      <MenuBar>{menu.map(m => <MenuItem key={m}>{m}</MenuItem>)}</MenuBar>
      <Toolbar>
        <Grip />
        {tools.map(([name, Icon]) => <ToolButton key={name}>{Icon && <Icon />}{name}</ToolButton>)}
        <ToolText $rule>001</ToolText>
        <ToolText>REZ | 001 | Lendl David MUDr</ToolText>
        <MoreButton>...</MoreButton>
      </Toolbar>
      <ContextBar>
        <ContextTitle><PageIcon />Emmy</ContextTitle>
        <ContextCell $w={26} aria-label="Více"><DotsIcon /></ContextCell>
        <ContextCell $w={26} aria-label="Jas"><SunIcon /></ContextCell>
        <ContextSpace />
        <ContextCell $w={32} aria-label="Graf"><TrendIcon /></ContextCell>
        <ContextCell $w={28} aria-label="Server"><ServerIcon /></ContextCell>
      </ContextBar>
      <WorkArea>
        <Sidebar>
          <SideNav>{sections.map((s, i) => <SideItem key={s} $active={i === 0}>{s}</SideItem>)}</SideNav>
          <Version>verze 2.0.8.6</Version>
        </Sidebar>
        <PatientCard />
      </WorkArea>
      <StatusBar>
        <StatusCell $w={734} /><StatusCell $w={66} /><StatusCell /><StatusCell $w={66} />
      </StatusBar>
      <SystemTaskbar />
      <ProgramsDialog />
    </Desktop>
  );
}
